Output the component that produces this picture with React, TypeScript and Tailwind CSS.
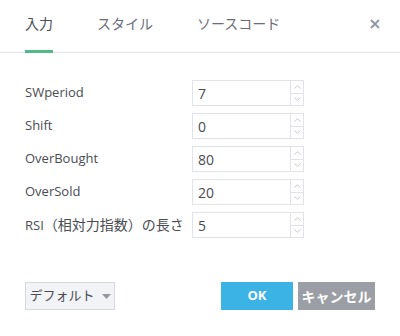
import { useState } from 'react';

interface Param {
  label: string;
  cjk?: string;
  value: string;
}

const PARAMS: Param[] = [
  { label: 'SWperiod', value: '7' },
  { label: 'Shift', value: '0' },
  { label: 'OverBought', value: '80' },
  { label: 'OverSold', value: '20' },
  { label: 'RSI', cjk: '（相対力指数）の長さ', value: '5' },
];

const TABS = ['入力', 'スタイル', 'ソースコード'];

const FONT = { fontFamily: '"Open Sans", "Noto Sans CJK JP", sans-serif' };

function Spinner() {
  return (
    <div className="flex flex-col w-[13px] border-l border-[#e0e3eb]">
      <button className="flex-1 flex items-center justify-center border-b border-[#e0e3eb]">
        <svg width="7" height="4" viewBox="0 0 7 4">
          <path d="M0.5 3.5 L3.5 0.8 L6.5 3.5" fill="none" stroke="#c5c8cf" strokeWidth="1" />
        </svg>
      </button>
      <button className="flex-1 flex items-center justify-center">
        <svg width="7" height="4" viewBox="0 0 7 4">
          <path d="M0.5 0.5 L3.5 3.2 L6.5 0.5" fill="none" stroke="#c5c8cf" strokeWidth="1" />
        </svg>
      </button>
    </div>
  );
}

function ParamRow({ param }: { param: Param }) {
  const [value, setValue] = useState(param.value);
  return (
    <div className="flex items-center h-[26px]">
      <label className="w-[167px] whitespace-nowrap text-[13px] text-[#4a4c52]">
        {param.label}
        {param.cjk && <span className="text-[14px]">{param.cjk}</span>}
      </label>
      <div className="flex w-[112px] h-[26px] border border-[#e0e3eb] bg-white">
        <input
          value={value}
          onChange={(e) => setValue(e.target.value)}
          className="flex-1 min-w-0 px-[5px] text-[14px] text-[#4a4c52] outline-none bg-transparent"
        />
        <Spinner />
      </div>
    </div>
  );
}

export default function App() {
  const [tab, setTab] = useState(0);

  return (
    <div className="w-[400px] h-[336px] bg-white flex flex-col" style={FONT}>
      <div className="h-[53px] border-b border-[#e0e3eb] flex items-stretch pl-[25px] pr-[20px]">
        <div className="flex gap-[44px]">
          {TABS.map((t, i) => (
            <button
              key={t}
              onClick={() => setTab(i)}
              className={`relative text-[14px] pb-[6px] ${i === tab ? 'text-[#4b4e57]' : 'text-[#6a6d78]'}`}
            >
              {t}
              {i === tab && (
                <span className="absolute left-0 right-0 bottom-[-1px] h-[3px] bg-[#53b987]" />
              )}
            </button>
          ))}
        </div>
        <button className="ml-auto self-start mt-[19px] text-[#9598a1]">
          <svg width="10" height="10" viewBox="0 0 10 10">
            <path d="M1 1 L9 9 M9 1 L1 9" stroke="currentColor" strokeWidth="2" />
          </svg>
        </button>
      </div>

      <div className="flex flex-col gap-[7px] pt-[27px] pl-[25px]">
        {PARAMS.map((p) => (
          <ParamRow key={p.label} param={p} />
        ))}
      </div>

      <div className="flex items-center mt-[44px] pl-[25px] pr-[25px]">
        <button className="flex items-center justify-center gap-[7px] whitespace-nowrap h-[28px] w-[90px] bg-[#f1f3f6] border border-[#d6d8dd] text-[13px] text-[#4a4c52]">
          デフォルト
          <svg width="9" height="5" viewBox="0 0 9 5">
            <path d="M0 0 L9 0 L4.5 5 Z" fill="#9598a1" />
          </svg>
        </button>
        <button className="ml-auto h-[28px] w-[72px] bg-[#3bb3e4] text-white text-[13px] font-bold">
          OK
        </button>
        <button className="ml-[5px] h-[28px] w-[77px] whitespace-nowrap bg-[#9b9ea4] text-white text-[14px] font-bold">
          キャンセル
        </button>
      </div>
    </div>
  );
}
